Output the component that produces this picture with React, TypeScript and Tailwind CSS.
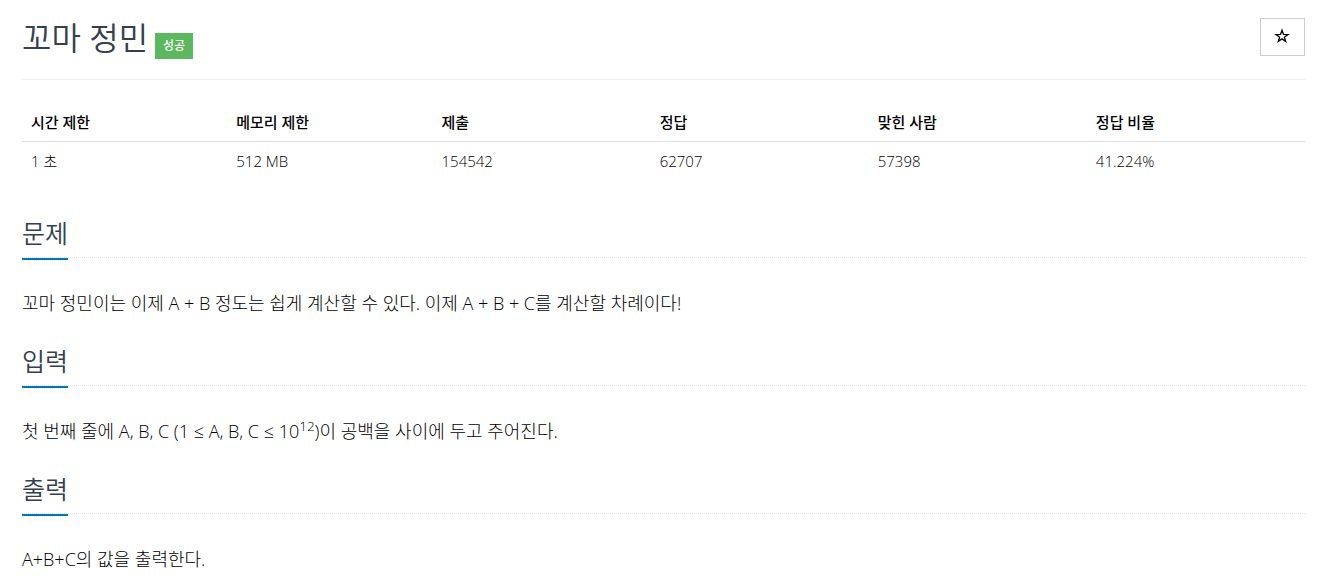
import type { ReactNode } from "react";

const stats = [
  { label: "시간 제한", value: "1 초", width: "w-[16%]" },
  { label: "메모리 제한", value: "512 MB", width: "w-[16%]" },
  { label: "제출", value: "154542", width: "w-[17%]" },
  { label: "정답", value: "62707", width: "w-[17%]" },
  { label: "맞힌 사람", value: "57398", width: "w-[17%]" },
  { label: "정답 비율", value: "41.224%", width: "w-[17%]" },
];

function Section({ title, children }: { title: string; children: ReactNode }) {
  return (
    <section className="mb-[27px]">
      <div className="mb-[30px] flex border-b border-dotted border-[#e0e4ea]">
        <h2 className="-mb-[3px] border-b-2 border-[#0076c0] pb-[9px] text-[25px] font-[350] leading-8 text-[#34404e]">
          {title}
        </h2>
      </div>
      <p className="text-[18px] leading-[30px]">{children}</p>
    </section>
  );
}

export default function App() {
  return (
    <main className="bg-white pl-[22px] pr-5 pt-[18px] font-['Open_Sans','Noto_Sans_CJK_KR',sans-serif] font-light text-black">
      <header className="flex items-start justify-between border-b border-[#eee] pb-[20px]">
        <div className="flex items-baseline gap-[7px]">
          <h1 className="text-[32px] font-[350] leading-10 text-[#34404e]">꼬마 정민</h1>
          <span className="bg-[#5cb85c] px-2 text-[12px] font-medium leading-[26px] text-white">성공</span>
        </div>
        <button
          type="button"
          aria-label="즐겨찾기"
          className="flex h-[38px] w-[45px] items-center justify-center border border-[#ccc] bg-white pb-0.5 pr-px text-black"
        >
          <svg viewBox="0 0 16 16" className="size-4" fill="none" stroke="currentColor" strokeWidth="1.3">
            <path d="M8 2.2 9.5 6.4 14 6.5 10.4 9.2 11.7 13.5 8 10.9 4.3 13.5 5.6 9.2 2 6.5 6.5 6.4Z" />
          </svg>
        </button>
      </header>

      <table className="mb-[37px] mt-[23px] w-full table-fixed text-left text-[15px] leading-[22px]">
        <thead>
          <tr className="border-b border-[#ddd]">
            {stats.map((s) => (
              <th key={s.label} className={`${s.width} px-[9px] py-2 font-medium`}>
                {s.label}
              </th>
            ))}
          </tr>
        </thead>
        <tbody>
          <tr>
            {stats.map((s) => (
              <td key={s.label} className="px-[9px] py-2">
                {s.value}
              </td>
            ))}
          </tr>
        </tbody>
      </table>

      <Section title="문제">
        꼬마 정민이는 이제 A + B 정도는 쉽게 계산할 수 있다. 이제 A + B + C를 계산할 차례이다!
      </Section>
      <Section title="입력">
        첫 번째 줄에 A, B, C (1 ≤ A, B, C ≤ 10<sup>12</sup>)이 공백을 사이에 두고 주어진다.
      </Section>
      <Section title="출력">A+B+C의 값을 출력한다.</Section>
    </main>
  );
}
